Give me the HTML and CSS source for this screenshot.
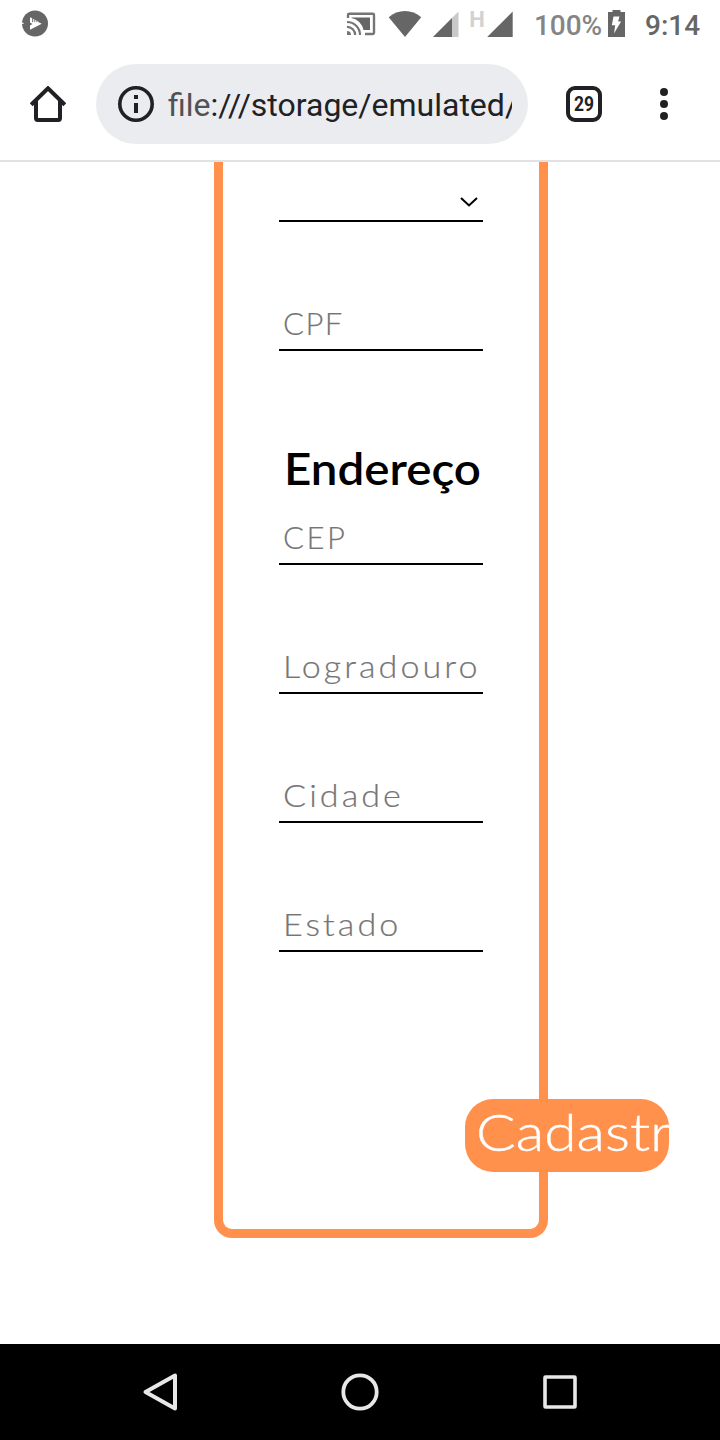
FILE: index.html
```
<!DOCTYPE html>
<html lang="pt-BR">
<head>
<meta charset="utf-8">
<title>Cadastro</title>
<link rel="stylesheet" href="styles.css">
</head>
<body>
<div class="screen">
  <header class="status">
    <svg class="app-icon" width="26" height="28" viewBox="0 0 26 28"><circle cx="13" cy="13.500" r="13" fill="#666"/><path d="M8 7.300l2.200 1v4l1-.2V8.800l1.200.6v2.800l.8-.1V9.900l1.200.6v1.700l.8-.1v-1.200l1.200.6v1l.8-.1 2.600 1.300L8 19.800v-4.300l2.500-1.500L8 12.500z" fill="#fff"/><path d="M0 12.800h1.500v1.200H0z" fill="#fff"/></svg>
    <svg class="signals" width="190" height="48" viewBox="330 0 190 48">
      <path d="M348 18v-3q0-1.200 1.200-1.200h23.600q1.200 0 1.200 1.200v17.800q0 1.200-1.200 1.200H365" fill="none" stroke="#757575" stroke-width="2.400"/>
      <path d="M351.500 17.500H370V30h-6.500A16 16 0 0 0 351.500 18z" fill="#666"/>
      <g fill="none" stroke="#757575" stroke-width="2.200"><path d="M347 22a13 13 0 0 1 13 13M347 26.800a8.200 8.200 0 0 1 8.200 8.200"/></g>
      <path d="M347 31a4 4 0 0 1 4 4h-4z" fill="#757575"/>
      <path d="M388.700 17.300Q396 11 405 11t16.200 6.300L405 37z" fill="#666"/>
      <path d="M458.500 11.500V37H433z" fill="#c9c9c9"/><path d="M452 18v19h-19z" fill="#666"/>
      <path d="M512.700 11.500V37H487.200z" fill="#666"/>
      <text class="net" x="469.200" y="27">H</text>
    </svg>
    <span class="percent">100%</span>
    <svg class="battery" width="17" height="28" viewBox="0 0 17 28"><path d="M4.500 0h8v2H17v25H0V2h4.500z" fill="#666"/><path d="M5.500 6.500h6l-1.400 5h3L6 23.500l1.200-8.300H3.800z" fill="#fff"/></svg>
    <span class="clock">9:14</span>
  </header>
  <nav class="toolbar">
    <svg class="home" width="36" height="36" viewBox="0 0 36 36"><path d="M1.200 18.700L18 2.300l16.800 16.400M6 15v17.300q0 1.700 1.700 1.700h20.600q1.700 0 1.700-1.700V15" fill="none" stroke="#202124" stroke-width="4"/></svg>
    <div class="address">
      <svg width="36" height="36" viewBox="0 0 36 36"><circle cx="18" cy="18" r="16.200" fill="none" stroke="#202124" stroke-width="3.600"/><path d="M16 9h4v4h-4zM16 17h4v10h-4z" fill="#202124"/></svg>
      <div class="url"><span class="scheme">file</span>:///storage/emulated/</div>
    </div>
    <svg class="tabs" width="36" height="36" viewBox="0 0 36 36"><rect x="2" y="2" width="32" height="32" rx="7" fill="none" stroke="#202124" stroke-width="4"/><text x="8" y="25" textLength="20" lengthAdjust="spacingAndGlyphs">29</text></svg>
    <svg class="more" width="8" height="32" viewBox="0 0 8 32"><g fill="#202124"><circle cx="4" cy="4" r="4"/><circle cx="4" cy="16" r="4"/><circle cx="4" cy="28" r="4"/></g></svg>
  </nav>
  <main class="page">
    <form class="form">
      <div class="field select"><svg width="18" height="10" viewBox="0 0 18 10"><path d="M1 1l8 7.500L17 1" fill="none" stroke="#000" stroke-width="2"/></svg></div>
      <div class="field cpf">CPF</div>
      <h1 class="title"><span class="wide">Endereço</span></h1>
      <div class="field cep">CEP</div>
      <div class="field"><span class="wide">Logradouro</span></div>
      <div class="field"><span class="wide">Cidade</span></div>
      <div class="field"><span class="wide">Estado</span></div>
      <div class="submit"><span class="wide">Cadastr</span></div>
    </form>
  </main>
  <footer class="system">
    <svg width="38" height="40" viewBox="0 0 38 40"><path d="M34 3.500v33L4.500 20z" fill="none" stroke="#e8e8e8" stroke-width="4" stroke-linejoin="round"/></svg>
    <svg width="38" height="38" viewBox="0 0 38 38"><circle cx="19" cy="19" r="16.700" fill="none" stroke="#e8e8e8" stroke-width="3.800"/></svg>
    <svg width="38" height="38" viewBox="0 0 38 38"><rect x="4" y="4" width="30" height="30" rx=".5" fill="none" stroke="#e8e8e8" stroke-width="3.600" stroke-linejoin="round"/></svg>
  </footer>
</div>
</body>
</html>
```
FILE: styles.css
```
* { box-sizing: border-box; }
body { margin: 0; background: #fff; }
svg { display: block; flex: none; }
.screen { width: 720px; height: 1440px; overflow: hidden; display: flex; flex-direction: column; font-family: Roboto, sans-serif; }
.status { height: 48px; flex: none; display: flex; color: #666; font-size: 29px; line-height: 51px; }
.app-icon { margin: 10px 0 0 22px; }
.signals { margin-left: 282px; }
.net { font: 700 22px Roboto, sans-serif; fill: #d2d2d2; }
.percent { width: 73px; margin-left: 14px; color: #858585; font-size: 28px; font-weight: 500; letter-spacing: -.1px; white-space: nowrap; }
.battery { margin: 10px 0 0 1px; }
.clock { margin-left: 20px; font-size: 28px; font-weight: 500; white-space: nowrap; }
.toolbar { height: 114px; flex: none; display: flex; align-items: center; border-bottom: 2px solid #e1e3e2; padding-left: 30px; }
.address { width: 432px; height: 80px; margin-left: 30px; padding: 0 16px 0 22px; display: flex; align-items: center; background: #ebecf0; border-radius: 40px; }
.url { width: 344px; margin-left: 14px; overflow: hidden; white-space: nowrap; color: #202124; font-size: 32px; line-height: 44px; padding-top: 2px; }
.scheme { color: #505154; }
.tabs { margin-left: 38px; }
.tabs text { fill: #202124; font: 700 20px Roboto, sans-serif; }
.more { margin-left: 58px; }
.page { height: 1182px; flex: none; padding-left: 214px; overflow: hidden; }
.form { width: 334px; height: 1076px; border: 9px solid #ff914d; border-top: 0; border-radius: 0 0 18px 18px; padding-left: 56px; font-family: Lato, sans-serif; }
.field { width: 204px; height: 44px; margin-bottom: 85px; padding-left: 4px; border-bottom: 2px solid #000; color: #757575; font-size: 31px; font-weight: 300; line-height: 32px; letter-spacing: 2.8px; -webkit-text-stroke: .2px #757575; white-space: nowrap; }
.wide { display: inline-block; transform: scaleX(1.1); transform-origin: left; }
.select { height: 60px; padding: 35px 0 0 181px; }
.cpf { margin-bottom: 0; letter-spacing: 1.5px; }
.cep { letter-spacing: 2.5px; }
.title { width: 204px; height: 85px; margin: 85px 0 0; padding-left: 5px; color: #000; font-size: 44px; font-weight: 600; line-height: 65px; white-space: nowrap; }
.title .wide { transform: scaleX(1.08); }
.submit { position: relative; left: 186px; width: 204px; height: 73px; margin-top: 147px; padding-left: 11px; border-radius: 28px; overflow: hidden; background: #ff914d; color: #fff; font-size: 52px; font-weight: 300; line-height: 64px; -webkit-text-stroke: .4px #fff; white-space: nowrap; }
.submit .wide { transform: scaleX(1.13); }
.system { height: 96px; flex: none; display: flex; align-items: center; justify-content: space-between; padding: 0 141px; background: #000; }
```
